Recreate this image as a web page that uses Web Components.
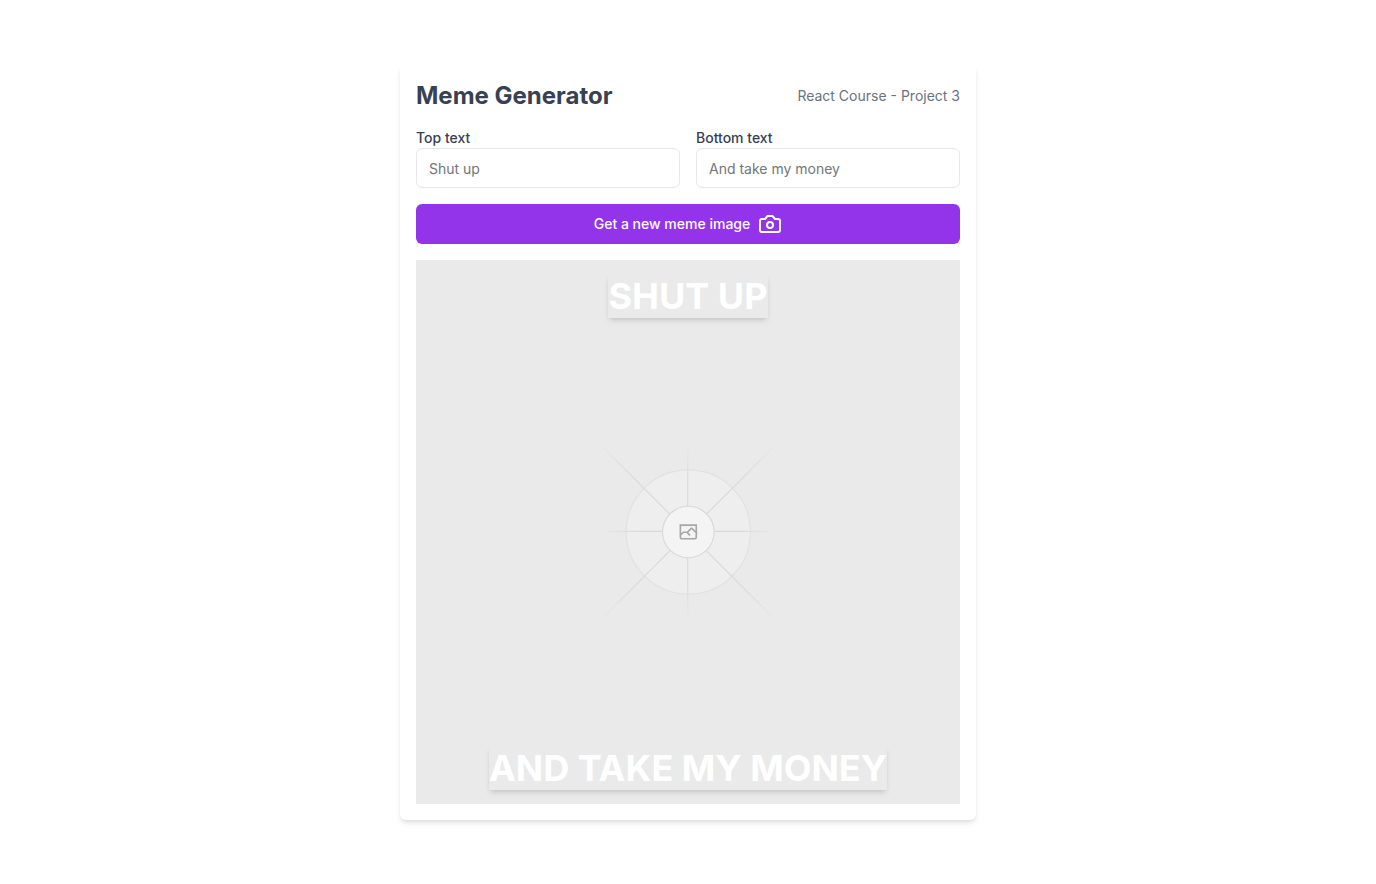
<!DOCTYPE html>
<html lang="en">
<head>
<meta charset="utf-8">
<meta name="viewport" content="width=device-width, initial-scale=1">
<title>Meme Generator</title>
<style>
  body { margin: 0; background: #fff; color: #374151; font: 14px/20px Inter, sans-serif; }
</style>
</head>
<body>
<meme-app></meme-app>

<script>
const define = (name, markup, setup) => {
  const template = document.createElement('template');
  template.innerHTML = '<style>*{box-sizing:border-box}</style>' + markup;
  customElements.define(name, class extends HTMLElement {
    constructor() {
      super();
      this.attachShadow({ mode: 'open' }).append(template.content.cloneNode(true));
    }
    connectedCallback() { if (setup) setup(this, this.shadowRoot); }
  });
};

define('meme-header', `
  <style>
    :host { display: flex; align-items: center; justify-content: space-between; gap: 16px; }
    h1 { margin: 0; font-size: 24px; line-height: 32px; font-weight: 700; }
    span { color: #6b7280; }
  </style>
  <h1><slot></slot></h1>
  <span><slot name="note"></slot></span>`);

define('text-field', `
  <style>
    :host { display: block; min-width: 0; }
    label { display: block; font-weight: 500; }
    input {
      display: block; width: 100%; height: 40px; margin: 0; padding: 0 12px;
      font: inherit; color: inherit; background: #fff;
      border: 1px solid #e5e7eb; border-radius: 6px;
    }
    input::placeholder { color: #757575; opacity: 1; }
  </style>
  <label for="field"><slot></slot></label>
  <input id="field" type="text">`, (host, root) => {
  root.querySelector('input').placeholder = host.getAttribute('placeholder') || '';
});

define('action-button', `
  <style>
    :host { display: block; }
    button {
      display: flex; align-items: center; justify-content: center; gap: 8px;
      width: 100%; height: 40px; padding: 0 16px; border: 0; border-radius: 6px;
      background: #9333ea; color: #fff; font: inherit; font-weight: 500; cursor: pointer;
    }
    svg { width: 24px; height: 24px; }
  </style>
  <button type="button"><slot></slot>
    <svg viewBox="0 0 24 24" fill="none" stroke="currentColor" stroke-width="2" stroke-linecap="round" stroke-linejoin="round" aria-hidden="true">
      <path d="M14.5 4h-5L7 7H4a2 2 0 0 0-2 2v9a2 2 0 0 0 2 2h16a2 2 0 0 0 2-2V9a2 2 0 0 0-2-2h-3l-2.5-3z"/>
      <circle cx="12" cy="13" r="3"/>
    </svg>
  </button>`);

define('image-placeholder', `
  <style>
    :host { display: block; }
    svg { display: block; width: 100%; height: auto; }
  </style>
  <svg viewBox="0 0 1200 1200" fill="none" role="img" aria-label="Meme image">
    <defs>
      <linearGradient id="fade">
        <stop stop-color="#C9C9C9" stop-opacity="0"/>
        <stop offset=".208" stop-color="#C9C9C9"/>
        <stop offset=".792" stop-color="#C9C9C9"/>
        <stop offset="1" stop-color="#C9C9C9" stop-opacity="0"/>
      </linearGradient>
      <linearGradient id="h" href="#fade" x1="412" y1="599" x2="790" y2="599" gradientUnits="userSpaceOnUse"/>
      <linearGradient id="v" href="#fade" x1="600" y1="408" x2="600" y2="792" gradientUnits="userSpaceOnUse"/>
      <linearGradient id="d1" href="#fade" x1="796.2" y1="405.1" x2="404.8" y2="796.6" gradientUnits="userSpaceOnUse"/>
      <linearGradient id="d2" href="#fade" x1="404.3" y1="405.1" x2="795.7" y2="796.6" gradientUnits="userSpaceOnUse"/>
    </defs>
    <path fill="#EAEAEA" d="M0 0h1200v1200H0z"/>
    <g opacity=".5" stroke-width="2.418">
      <circle cx="600.7" cy="599.9" r="136.6" fill="#FAFAFA" opacity=".5"/>
      <circle cx="600.7" cy="599.9" r="137" stroke="#C9C9C9" opacity=".5"/>
      <path stroke="url(#d1)" d="M404.8 796.6 796.2 405.1"/>
      <path stroke="url(#h)" d="M404.8 598.7h391.8"/>
      <path stroke="url(#v)" d="M599.5 795.7V404"/>
      <path stroke="url(#d2)" d="M795.7 796.6 404.3 405.1"/>
      <circle cx="600.7" cy="599.9" r="56.8" fill="#fff"/>
      <path fill="#666" fill-rule="evenodd" d="M616.426 586.58h-31.434v16.176l3.553-3.554.531-.531h9.068l.074-.074 8.463-8.463h2.565l7.18 7.181V586.58Zm-15.715 14.654 3.698 3.699 1.283 1.282-2.565 2.565-1.282-1.283-5.2-5.199h-6.066l-5.514 5.514-.073.073v2.876a2.418 2.418 0 0 0 2.418 2.418h26.598a2.418 2.418 0 0 0 2.418-2.418v-8.317l-8.463-8.463-7.181 7.181-.071.072Zm-19.347 5.442v4.085a6.045 6.045 0 0 0 6.046 6.045h26.598a6.044 6.044 0 0 0 6.045-6.045v-7.108l1.356-1.355-1.282-1.283-.074-.073v-17.989h-38.689v23.43l-.146.146.146.147Z"/>
      <circle cx="600.7" cy="599.9" r="56.8" stroke="#C9C9C9"/>
    </g>
  </svg>`);

define('meme-preview', `
  <style>
    :host { display: grid; }
    image-placeholder, .captions { grid-area: 1 / 1; }
    .captions {
      display: flex; flex-direction: column; justify-content: space-between;
      z-index: 1; padding: 16px; text-align: center; text-transform: uppercase;
      color: #fff; font-size: 36px; line-height: 40px; font-weight: 700;
    }
    p { margin: 0; }
    span { box-shadow: 0 4px 6px -1px rgb(0 0 0 / .1), 0 2px 4px -2px rgb(0 0 0 / .1); }
  </style>
  <image-placeholder></image-placeholder>
  <div class="captions">
    <p><span><slot name="top"></slot></span></p>
    <p><span><slot name="bottom"></slot></span></p>
  </div>`);

define('meme-app', `
  <style>
    :host { display: flex; align-items: center; justify-content: center; min-height: 100vh; }
    main {
      display: grid; gap: 16px; width: 100%; max-width: 576px; padding: 16px;
      background: #fff; border-radius: 6px;
      box-shadow: 0 4px 6px -1px rgb(0 0 0 / .1), 0 2px 4px -2px rgb(0 0 0 / .1);
    }
    .fields { display: grid; grid-template-columns: 1fr 1fr; gap: 16px; }
  </style>
  <main>
    <meme-header>Meme Generator<span slot="note">React Course - Project 3</span></meme-header>
    <div class="fields">
      <text-field placeholder="Shut up">Top text</text-field>
      <text-field placeholder="And take my money">Bottom text</text-field>
    </div>
    <action-button>Get a new meme image</action-button>
    <meme-preview>
      <span slot="top">Shut up</span>
      <span slot="bottom">And take my money</span>
    </meme-preview>
  </main>`);
</script>
</body>
</html>
